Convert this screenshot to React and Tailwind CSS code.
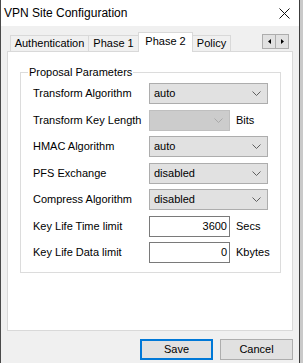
import React from 'react';

const font = { fontFamily: '"Liberation Sans", Arial, sans-serif' };

const Chevron = ({ color = '#5f5f5f' }) => (
    <svg width="9" height="5" viewBox="0 0 9 5" className="shrink-0">
        <path d="M0.5 0.5 L4.5 4.5 L8.5 0.5" fill="none" stroke={color} strokeWidth="1" />
    </svg>
);

const Select = ({ value, disabled, width = 'w-[119px]' }) => (
    <div
        className={`${width} h-[21px] flex items-center justify-between pl-[4px] pr-[6px] border ${
            disabled ? 'bg-[#cccccc] border-[#bfbfbf]' : 'bg-[#e1e1e1] border-[#adadad]'
        }`}
    >
        <span className="text-[11px] leading-none text-black">{value}</span>
        <Chevron color={disabled ? '#a9a9a9' : '#5f5f5f'} />
    </div>
);

const NumberBox = ({ value }) => (
    <div className="w-[81px] h-[21px] flex items-center justify-end pr-[2px] bg-white border border-[#7a7a7a]">
        <span className="text-[11px] leading-none text-black">{value}</span>
    </div>
);

const Row = ({ label, children }) => (
    <div className="flex items-center h-[21px]">
        <span className="w-[116px] text-[11px] text-black whitespace-nowrap">{label}</span>
        {children}
    </div>
);

const Tab = ({ label, active, width }) =>
    active ? (
        <div className={`${width} h-[20px] -mb-px -ml-px relative z-10 flex items-center justify-center pb-[2px] bg-white border border-b-0 border-[#d9d9d9] text-[11px] text-black`}>
            {label}
        </div>
    ) : (
        <div className={`${width} h-[16px] flex items-center justify-center bg-[#f0f0f0] border border-b-0 border-[#d9d9d9] -ml-px first:ml-0 text-[11px] text-black`}>
            {label}
        </div>
    );

export default function App() {
    return (
        <div className="w-[303px] h-[363px] flex overflow-hidden bg-[#c9c9c9]" style={font}>
            <div className="w-[1px] bg-[#4a4a4a]" />
            <div className="w-[298px] flex flex-col bg-[#f0f0f0]">
                {/* title bar */}
                <div className="h-[26px] bg-white flex items-center justify-between pl-[3px] pr-[9px]">
                    <span className="text-[12px] text-black">VPN Site Configuration</span>
                    <svg width="11" height="11" viewBox="0 0 11 11">
                        <path d="M0.5 0.5 L10.5 10.5 M10.5 0.5 L0.5 10.5" stroke="#111" strokeWidth="1" />
                    </svg>
                </div>

                <div className="pl-[6px] pr-[6px] pt-[6px]">
                    {/* tabs */}
                    <div className="flex items-end h-[19px] pl-[3px] pr-[4px]">
                        <Tab label="Authentication" width="w-[79px]" />
                        <Tab label="Phase 1" width="w-[51px]" />
                        <Tab label="Phase 2" width="w-[55px]" active />
                        <Tab label="Policy" width="w-[39px]" />
                        <div className="ml-auto mb-[2px] flex">
                            <div className="w-[14px] h-[15px] flex items-center justify-center bg-[#e1e1e1] border border-[#adadad]">
                                <svg width="3" height="5" viewBox="0 0 3 5"><path d="M3 0 L0 2.5 L3 5 Z" fill="#000" /></svg>
                            </div>
                            <div className="w-[14px] h-[15px] -ml-px flex items-center justify-center bg-[#e1e1e1] border border-[#adadad]">
                                <svg width="3" height="5" viewBox="0 0 3 5"><path d="M0 0 L3 2.5 L0 5 Z" fill="#000" /></svg>
                            </div>
                        </div>
                    </div>

                    {/* panel */}
                    <div className="h-[280px] bg-white border border-[#d9d9d9] pl-[12px] pr-[12px] pt-[14px]">
                        <fieldset className="border border-[#dcdcdc] pl-[12px] pr-[10px] pb-[9px]">
                            <legend className="-ml-[5px] px-[1px] text-[11px] leading-[13px] text-black">Proposal Parameters</legend>
                            <div className="flex flex-col gap-[5.5px] pt-[4px]">
                                <Row label="Transform Algorithm">
                                    <Select value="auto" />
                                </Row>
                                <Row label="Transform Key Length">
                                    <Select value="" disabled width="w-[81px]" />
                                    <span className="ml-[6px] text-[11px] text-black">Bits</span>
                                </Row>
                                <Row label="HMAC Algorithm">
                                    <Select value="auto" />
                                </Row>
                                <Row label="PFS Exchange">
                                    <Select value="disabled" />
                                </Row>
                                <Row label="Compress Algorithm">
                                    <Select value="disabled" />
                                </Row>
                                <Row label="Key Life Time limit">
                                    <NumberBox value="3600" />
                                    <span className="ml-[6px] text-[11px] text-black">Secs</span>
                                </Row>
                                <Row label="Key Life Data limit">
                                    <NumberBox value="0" />
                                    <span className="ml-[6px] text-[11px] text-black">Kbytes</span>
                                </Row>
                            </div>
                        </fieldset>
                    </div>

                    {/* buttons */}
                    <div className="flex justify-end gap-[7px] pt-[8px]">
                        <button className="w-[73px] h-[21px] flex items-center justify-center bg-[#e1e1e1] border-2 border-[#0078d7] text-[11px] text-black">
                            Save
                        </button>
                        <button className="w-[73px] h-[21px] flex items-center justify-center bg-[#e1e1e1] border border-[#adadad] text-[11px] text-black">
                            Cancel
                        </button>
                    </div>
                </div>
            </div>
            <div className="w-[1px] bg-[#3c3c3c]" />
        </div>
    );
}
